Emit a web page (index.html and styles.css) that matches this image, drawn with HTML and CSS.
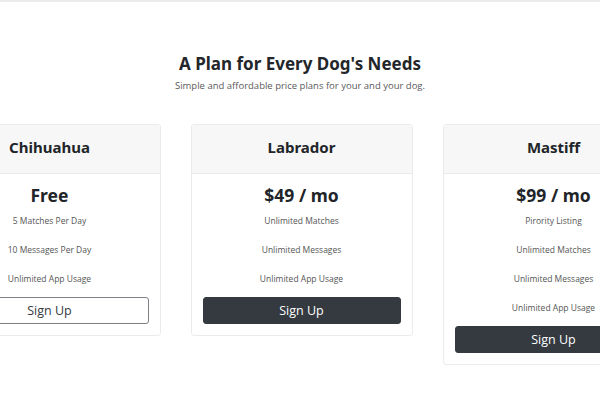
FILE: index.html
```html
<!DOCTYPE html>
<html>
<head>
<meta charset="utf-8">
<link rel="stylesheet" href="styles.css">
</head>
<body>
<div class="topline"></div>
<section class="pricing">
  <h1 class="title">A Plan for Every Dog's Needs</h1>
  <p class="subtitle">Simple and affordable price plans for your and your dog.</p>
  <div class="deck">
    <div class="card">
      <div class="card-head"><h3>Chihuahua</h3></div>
      <div class="card-body">
        <div class="price">Free</div>
        <ul class="features">
          <li>5 Matches Per Day</li>
          <li>10 Messages Per Day</li>
          <li>Unlimited App Usage</li>
        </ul>
        <button class="btn btn-outline">Sign Up</button>
      </div>
    </div>
    <div class="card">
      <div class="card-head"><h3>Labrador</h3></div>
      <div class="card-body">
        <div class="price">$49 / mo</div>
        <ul class="features">
          <li>Unlimited Matches</li>
          <li>Unlimited Messages</li>
          <li>Unlimited App Usage</li>
        </ul>
        <button class="btn btn-dark">Sign Up</button>
      </div>
    </div>
    <div class="card">
      <div class="card-head"><h3>Mastiff</h3></div>
      <div class="card-body">
        <div class="price">$99 / mo</div>
        <ul class="features">
          <li>Pirority Listing</li>
          <li>Unlimited Matches</li>
          <li>Unlimited Messages</li>
          <li>Unlimited App Usage</li>
        </ul>
        <button class="btn btn-dark">Sign Up</button>
      </div>
    </div>
  </div>
</section>
</body>
</html>
```
FILE: styles.css
```css
html, body {
  margin: 0;
  padding: 0;
  background: #fff;
  overflow: hidden;
}
body {
  width: 600px;
  height: 400px;
  font-family: "Open Sans", "Noto Sans", sans-serif;
  color: #212529;
}
.topline {
  height: 2px;
  background: #ececec;
}
.pricing {
  display: flex;
  flex-direction: column;
  align-items: center;
  padding-top: 50px;
}
.title {
  margin: 0;
  font-family: "Noto Sans", sans-serif;
  font-weight: 700;
  font-size: 17px;
  line-height: 24px;
  color: #23262a;
}
.subtitle {
  margin: 3px 0 0;
  font-size: 9.5px;
  line-height: 14px;
  color: #5a5a5a;
}
.deck {
  box-sizing: border-box;
  display: flex;
  justify-content: center;
  gap: 30px;
  width: 600px;
  padding-left: 3px;
  margin-top: 31px;
}
.card {
  box-sizing: border-box;
  flex: 0 0 222px;
  border: 1px solid #ebebeb;
  border-radius: 3px;
  align-self: flex-start;
  background: #fff;
}
.card-head {
  box-sizing: border-box;
  height: 49px;
  padding-bottom: 4px;
  background: #f7f7f7;
  border-bottom: 1px solid #ebebeb;
  display: flex;
  align-items: center;
  justify-content: center;
}
.card-head h3 {
  margin: 0;
  font-family: "Noto Sans", sans-serif;
  font-weight: 700;
  font-size: 15px;
  color: #212529;
}
.card-body {
  padding: 7px 11px 11px;
  display: flex;
  flex-direction: column;
  align-items: center;
}
.price {
  font-family: "Noto Sans", sans-serif;
  font-weight: 700;
  font-size: 17.5px;
  line-height: 28px;
  color: #212529;
}
.features {
  list-style: none;
  margin: 5px 0 0;
  padding: 0;
  display: flex;
  flex-direction: column;
  align-items: center;
  gap: 16px;
}
.features li {
  font-size: 8.5px;
  line-height: 13px;
  color: #555;
}
.btn {
  margin-top: 12px;
  width: 100%;
  height: 27px;
  border-radius: 3px;
  font-family: "Open Sans", sans-serif;
  font-size: 12.5px;
  cursor: pointer;
}
.btn-outline {
  background: #fff;
  border: 1px solid #7d8186;
  color: #343a40;
}
.btn-dark {
  background: #343a40;
  border: 1px solid #343a40;
  color: #fff;
}
```
